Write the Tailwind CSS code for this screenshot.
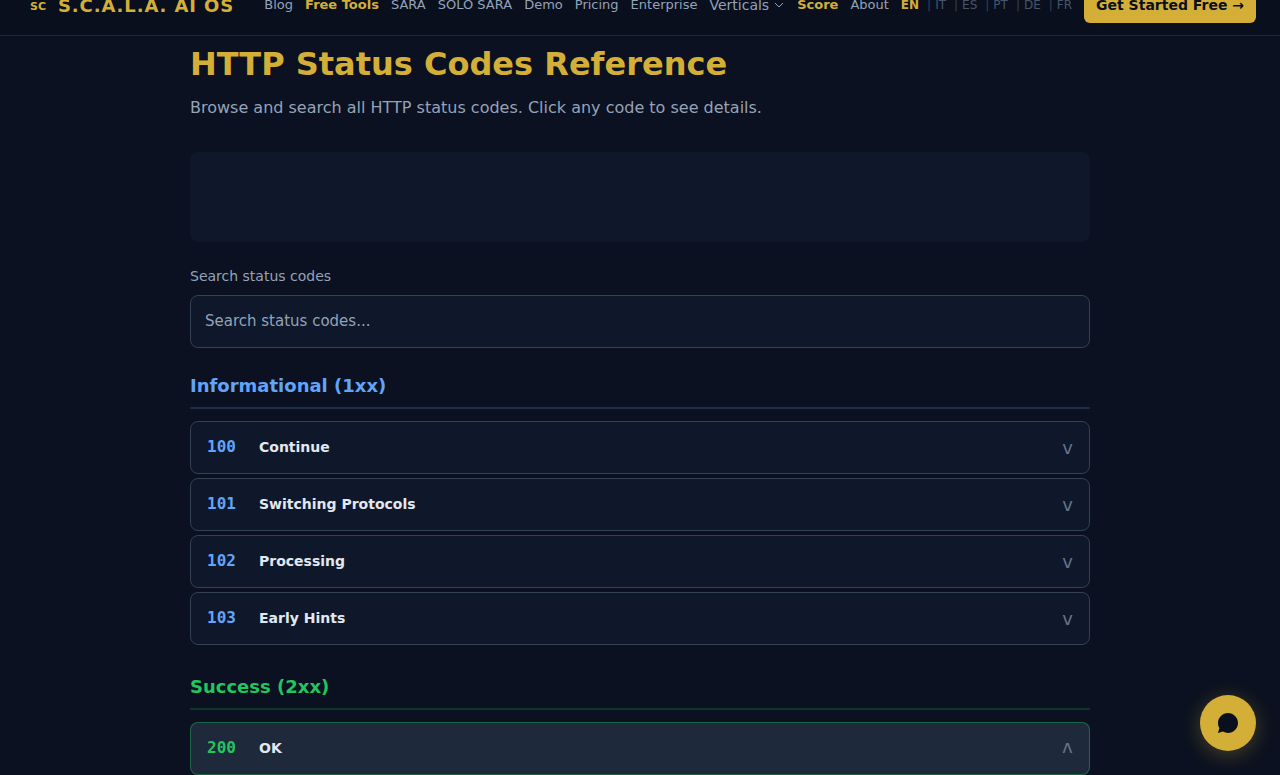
<!DOCTYPE html>
<html lang="en">
<head>
    <meta charset="utf-8"/>
    <meta content="width=device-width, initial-scale=1.0" name="viewport"/>
    <title>HTTP Status Codes Reference</title>
    <script src="https://cdn.jsdelivr.net/npm/@tailwindcss/browser@4"></script>
</head>
<body class="bg-[#0b1120] text-[#e2e8f0] font-['DejaVu_Sans',sans-serif] overflow-x-hidden">
    <header class="-mt-[26px] h-[62px] px-6 flex items-center justify-between bg-[#0a0f1e] border-b border-[#d4af37]/15 whitespace-nowrap">
        <a href="#" class="flex items-center gap-[6px] pt-0.5 text-[#d4af37] font-bold">
            <span class="w-7 h-7 pt-1 flex items-center justify-center text-[11px]">SC</span>
            <span class="text-lg tracking-wider">S.C.A.L.A. AI OS</span>
        </a>
        <nav class="flex items-center gap-3 text-[13px] text-[#94a3b8]">
            <a href="#">Blog</a>
            <a href="#" class="text-[#d4af37] font-bold">Free Tools</a>
            <a href="#">SARA</a>
            <a href="#">SOLO SARA</a>
            <a href="#">Demo</a>
            <a href="#">Pricing</a>
            <a href="#">Enterprise</a>
            <button type="button" class="flex items-center gap-1 text-sm">
                Verticals
                <svg class="w-3 h-3" viewBox="0 0 12 12" fill="none" stroke="currentColor"><path d="M2 4l4 4 4-4"/></svg>
            </button>
            <a href="#" class="text-[#d4af37] font-bold">Score</a>
            <a href="#">About</a>
            <div class="flex items-center gap-2 text-xs text-[#475569]">
                <a href="#" class="text-[#d4af37] font-bold">EN</a>
                <span class="flex gap-1"><span class="text-[#334155]">|</span><a href="#">IT</a></span>
                <span class="flex gap-1"><span class="text-[#334155]">|</span><a href="#">ES</a></span>
                <span class="flex gap-1"><span class="text-[#334155]">|</span><a href="#">PT</a></span>
                <span class="flex gap-1"><span class="text-[#334155]">|</span><a href="#">DE</a></span>
                <span class="flex gap-1"><span class="text-[#334155]">|</span><a href="#">FR</a></span>
            </div>
            <a href="#" class="bg-[#d4af37] text-[#0a0f1e] text-sm font-bold px-3 py-2 rounded-md">Get Started Free →</a>
        </nav>
    </header>

    <main class="max-w-[900px] mx-auto pt-2">
        <h1 class="text-[32px] leading-10 font-bold text-[#d4af37] mb-3">HTTP Status Codes Reference</h1>
        <p class="leading-6 text-[#94a3b8] mb-8">Browse and search all HTTP status codes. Click any code to see details.</p>

        <div class="h-[90px] rounded-lg bg-[#0f172a] mb-6"></div>

        <label for="search" class="block text-sm leading-[21px] text-[#94a3b8] mb-2">Search status codes</label>
        <input id="search" type="text" placeholder="Search status codes..." class="block w-full h-[53px] px-[14px] pb-0.5 text-[15px] rounded-lg bg-[#0f172a] border border-[#334155] placeholder:text-[#94a3b8]"/>

        <section class="mt-6">
            <h2 class="text-lg leading-[27px] font-bold text-[#60a5fa] pb-2 mb-3 border-b-2 border-[#60a5fa]/20">Informational (1xx)</h2>
            <div class="flex flex-col gap-1">
                <button type="button" class="flex items-center w-full h-[53px] px-4 rounded-lg bg-[#0f172a] border border-[#334155] text-left">
                    <span class="w-[52px] pb-0.5 font-['DejaVu_Sans_Mono',monospace] font-bold text-[#60a5fa]">100</span>
                    <span class="flex-1 pb-0.5 text-sm font-bold">Continue</span>
                    <span class="text-lg text-[#64748b]">v</span>
                </button>
                <button type="button" class="flex items-center w-full h-[53px] px-4 rounded-lg bg-[#0f172a] border border-[#334155] text-left">
                    <span class="w-[52px] pb-0.5 font-['DejaVu_Sans_Mono',monospace] font-bold text-[#60a5fa]">101</span>
                    <span class="flex-1 pb-0.5 text-sm font-bold">Switching Protocols</span>
                    <span class="text-lg text-[#64748b]">v</span>
                </button>
                <button type="button" class="flex items-center w-full h-[53px] px-4 rounded-lg bg-[#0f172a] border border-[#334155] text-left">
                    <span class="w-[52px] pb-0.5 font-['DejaVu_Sans_Mono',monospace] font-bold text-[#60a5fa]">102</span>
                    <span class="flex-1 pb-0.5 text-sm font-bold">Processing</span>
                    <span class="text-lg text-[#64748b]">v</span>
                </button>
                <button type="button" class="flex items-center w-full h-[53px] px-4 rounded-lg bg-[#0f172a] border border-[#334155] text-left">
                    <span class="w-[52px] pb-0.5 font-['DejaVu_Sans_Mono',monospace] font-bold text-[#60a5fa]">103</span>
                    <span class="flex-1 pb-0.5 text-sm font-bold">Early Hints</span>
                    <span class="text-lg text-[#64748b]">v</span>
                </button>
            </div>
        </section>

        <section class="mt-7">
            <h2 class="text-lg leading-[27px] font-bold text-[#22c55e] pb-2 mb-3 border-b-2 border-[#22c55e]/20">Success (2xx)</h2>
            <button type="button" aria-expanded="true" class="flex items-center w-full h-[53px] px-4 rounded-lg bg-[#1e293b] border border-[#22c55e]/40 text-left">
                <span class="w-[52px] pb-0.5 font-['DejaVu_Sans_Mono',monospace] font-bold text-[#22c55e]">200</span>
                <span class="flex-1 pb-0.5 text-sm font-bold">OK</span>
                <span class="text-lg text-[#64748b] rotate-180">v</span>
            </button>
        </section>
    </main>

    <button type="button" aria-label="Open chat" class="fixed right-6 bottom-6 w-14 h-14 rounded-full bg-[#d4af37] flex items-center justify-center shadow-[0_4px_20px_rgba(212,175,55,0.3)]">
        <svg class="w-6 h-6 text-[#0a0f1e]" viewBox="0 0 24 24" fill="currentColor"><path d="M12 2C6.48 2 2 6.48 2 12c0 1.85.5 3.58 1.38 5.06L2 22l4.94-1.38A9.96 9.96 0 0 0 12 22c5.52 0 10-4.48 10-10S17.52 2 12 2z"/></svg>
    </button>
</body>
</html>
